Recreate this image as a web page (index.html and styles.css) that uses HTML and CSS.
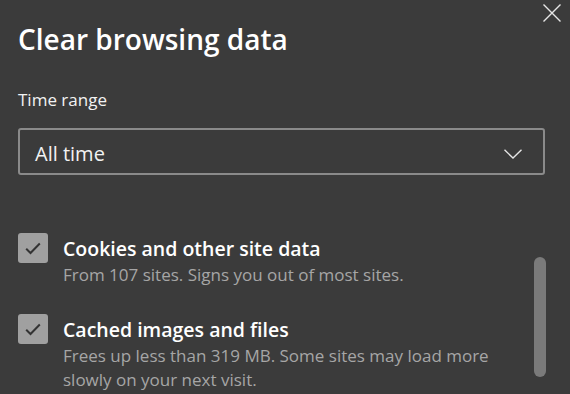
FILE: index.html
```html
<!DOCTYPE html>
<html lang="en">
<head>
    <meta charset="UTF-8">
    <title>Clear browsing data</title>
    <link rel="stylesheet" href="styles.css">
</head>
<body>
    <div class="dialog">
        <button class="close-button" aria-label="Close">
            <svg width="18" height="18" viewBox="0 0 18 18">
                <path d="M0.5 0.5 L17.5 17.5 M17.5 0.5 L0.5 17.5" stroke="#e6e6e6" stroke-width="1.4" fill="none"/>
            </svg>
        </button>

        <h1>Clear browsing data</h1>

        <label class="field-label">Time range</label>
        <div class="select-box">
            <span>All time</span>
            <svg width="18" height="10" viewBox="0 0 18 10">
                <path d="M0.5 0.8 L9 9 L17.5 0.8" stroke="#e6e6e6" stroke-width="1.4" fill="none"/>
            </svg>
        </div>

        <div class="options">
            <div class="option">
                <span class="checkbox">
                    <svg width="16" height="13" viewBox="0 0 16 13">
                        <path d="M1.2 6.8 L5.5 11 L14.8 1.5" stroke="#333333" stroke-width="2" fill="none"/>
                    </svg>
                </span>
                <div class="option-text">
                    <div class="option-title">Cookies and other site data</div>
                    <div class="option-desc">From 107 sites. Signs you out of most sites.</div>
                </div>
            </div>
            <div class="option">
                <span class="checkbox">
                    <svg width="16" height="13" viewBox="0 0 16 13">
                        <path d="M1.2 6.8 L5.5 11 L14.8 1.5" stroke="#333333" stroke-width="2" fill="none"/>
                    </svg>
                </span>
                <div class="option-text">
                    <div class="option-title">Cached images and files</div>
                    <div class="option-desc">Frees up less than 319 MB. Some sites may load more slowly on your next visit.</div>
                </div>
            </div>
        </div>

        <div class="scrollbar"></div>
    </div>
</body>
</html>
```

FILE: styles.css
```css
/* Dialogo oscuro */
body {
    margin: 0;
    padding: 0;
    background-color: #3b3b3b;
    font-family: 'Open Sans', 'Noto Sans', sans-serif;
    color: #ffffff;
    overflow: hidden;
}

.dialog {
    position: relative;
    width: 570px;
    height: 394px;
    box-sizing: border-box;
    padding: 21px 25px 0 18px;
}

.close-button {
    position: absolute;
    top: 4px;
    right: 9px;
    background: none;
    border: none;
    padding: 0;
    width: 18px;
    height: 18px;
    cursor: pointer;
    display: flex;
}

h1 {
    margin: 0;
    font-size: 28px;
    font-weight: 600;
    line-height: 36px;
}

.field-label {
    display: block;
    margin-top: 31px;
    font-size: 17px;
    line-height: 24px;
    color: #f2f2f2;
}

.select-box {
    margin-top: 16px;
    height: 47px;
    box-sizing: border-box;
    border: 2px solid #8a8a8a;
    border-radius: 3px;
    display: flex;
    align-items: center;
    justify-content: space-between;
    padding: 4px 21px 0 15px;
    font-size: 20px;
    color: #f2f2f2;
}

/* Lista de opciones */
.options {
    margin-top: 58px;
    display: flex;
    flex-direction: column;
    gap: 27px;
}

.option {
    display: flex;
    align-items: flex-start;
    gap: 15px;
}

.checkbox {
    width: 30px;
    height: 30px;
    flex-shrink: 0;
    background-color: #a0a0a0;
    border-radius: 3px;
    display: flex;
    align-items: center;
    justify-content: center;
}

.option-title {
    font-size: 19.5px;
    font-weight: 600;
    line-height: 28px;
    margin-top: 2px;
}

.option-desc {
    font-size: 17px;
    line-height: 24px;
    color: #a6a6a6;
    max-width: 440px;
}

.scrollbar {
    position: absolute;
    top: 257px;
    left: 534px;
    width: 12px;
    height: 120px;
    border-radius: 6px;
    background-color: #7a7a7a;
}
```
